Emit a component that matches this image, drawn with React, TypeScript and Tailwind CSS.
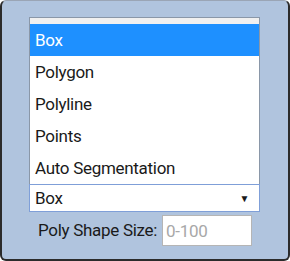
const items = ["Box", "Polygon", "Polyline", "Points", "Auto Segmentation"]

const App = () => {
  return (
    <div
      className="h-[261px] w-[290px] overflow-hidden rounded-[6px] border-x-2 border-b-2 border-t border-x-[#2b2b2b] border-b-[#2b2b2b] border-t-[#9aa5b5] bg-[#b0c4de] text-[17px] tracking-[-0.3px] text-[#1a1a1a]"
      style={{ fontFamily: "Roboto, 'Liberation Sans', sans-serif" }}
    >
      <div className="ml-[27px] mt-[16px] w-[231px]">
        <div className="border border-[#8a97a8] bg-white">
          <div className="h-[6px] bg-[#f0f0f0]" />
          {items.map((item, i) => (
            <div
              key={item}
              className={
                i === 0
                  ? "flex h-[32px] items-center bg-[#1e90ff] pl-[5px] pt-[2px] text-white"
                  : "flex h-[32px] items-center pl-[5px] pt-[2px]"
              }
            >
              {item}
            </div>
          ))}
        </div>
        <div className="-mt-[1px] flex h-[28px] items-center justify-between border border-[#7f9fd8] bg-white pl-[5px] pr-[10px] pt-[1px]">
          <span>Box</span>
          <span className="text-[10px]">▼</span>
        </div>
        <div className="mt-[3px] flex items-center gap-[5px] pl-[9px]">
          <span className="pt-[1px]">Poly Shape Size:</span>
          <input
            className="h-[31px] w-[90px] border border-[#b5b5b5] bg-white px-[3px] text-[17px] tracking-[-0.3px] placeholder:text-[#a8a8a8] outline-none"
            placeholder="0-100"
          />
        </div>
      </div>
    </div>
  )
}

export default App
